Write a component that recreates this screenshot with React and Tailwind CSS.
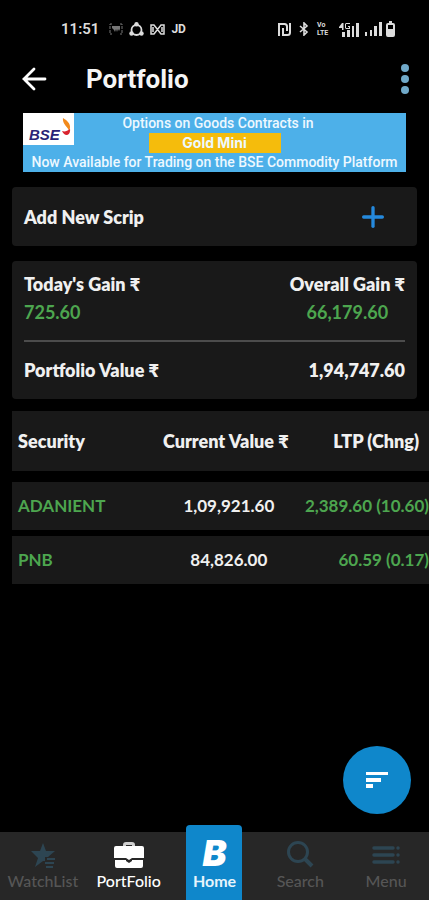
import { Plus } from "lucide-react";

const holdings = [
  { name: "ADANIENT", value: "1,09,921.60", ltp: "2,389.60 (10.60)" },
  { name: "PNB", value: "84,826.00", ltp: "60.59 (0.17)" },
];

function StatusBar() {
  return (
    <div className="flex h-[54px] items-center justify-between pt-1 pr-[34px] pl-[61px] font-['Roboto',sans-serif] text-[#dcdcdc]">
      <div className="flex items-center gap-1.5">
        <span className="mr-1 text-[15px] font-semibold">11:51</span>

        <svg width="14" height="12" viewBox="0 0 14 12" className="text-[#777]">
          <path d="M3 1H1v10h2M11 1h2v10h-2" fill="none" stroke="currentColor" strokeDasharray="3 1" />
          <path d="M3 3h8v3l-1 2-1-2-1 3-1-3-1 3-1-2-2-2z" fill="currentColor" />
        </svg>

        <svg width="15" height="15" viewBox="0 0 15 15">
          <circle cx="7.5" cy="8" r="5" fill="none" stroke="currentColor" strokeWidth="1.8" />
          <circle cx="7.5" cy="2.3" r="2.2" fill="currentColor" />
          <circle cx="2.5" cy="11.5" r="2.2" fill="currentColor" />
          <circle cx="12.5" cy="11.5" r="2.2" fill="currentColor" />
        </svg>

        <svg width="15" height="11" viewBox="0 0 15 11" fill="none" stroke="currentColor" strokeWidth="1.5">
          <path d="M4 1H1v9h3l7-9h3v9h-3L4 1zM3 3v5M12 3v5" />
        </svg>

        <span className="text-xs font-bold">JD</span>
      </div>

      <div className="flex items-center gap-2">
        <svg width="13" height="13" viewBox="0 0 13 13" fill="none" stroke="currentColor" strokeWidth="2">
          <path d="M1 13V1h5.500q2.500 0 2.500 2.500V8M12 0v9.500q0 2.500-2.500 2.500H5V5" />
        </svg>

        <svg width="10" height="14" viewBox="0 0 10 14" fill="none" stroke="currentColor" strokeWidth="1.6">
          <path d="M1 4l7 6-3 3V1l3 3-7 6" />
        </svg>

        <div className="flex w-3.5 flex-col text-[7px] leading-2 font-bold">
          <span>Vo</span>
          <span>LTE</span>
        </div>

        <svg width="20" height="15" viewBox="0 0 20 15" fill="currentColor">
          <path d="M3 10h3v5H3zM8 8h3v7H8zM13 4h2v11h-2zM17 1h3v14h-3zM3 1l-3 4v1h3v2h1.500V1zM11 1H7L6 2v4l1 1h4V4H9v1h1v1H7V2h4z" />
        </svg>

        <svg width="17" height="14" viewBox="0 0 17 14" fill="currentColor" className="-ml-0.5">
          <path d="M0 10h2v4H0zM5 8h2v6H5zM9 4h3v10H9zM14 0h3v14h-3z" />
        </svg>

        <svg width="9" height="16" viewBox="0 0 9 16" className="-ml-1">
          <path d="M3 0h3v2H3z" fill="currentColor" />
          <rect x="1" y="3" width="7" height="12" rx="1" fill="none" stroke="currentColor" strokeWidth="2" />
          <path d="M2 8h5v6H2z" fill="currentColor" />
        </svg>
      </div>
    </div>
  );
}

function Header() {
  return (
    <header className="flex h-[50px] items-center pr-[19px] pl-[21px]">
      <button type="button" aria-label="Back">
        <svg width="26" height="24" viewBox="0 0 26 24" fill="none" stroke="white" strokeWidth="2.800" strokeLinecap="round">
          <path d="M24 12H3M13 2L3 12l10 10" />
        </svg>
      </button>

      <h1 className="ml-[39px] flex-1 font-['Roboto',sans-serif] text-[26px] leading-8 font-bold text-[#f5f5f5]">
        Portfolio
      </h1>

      <button type="button" aria-label="More options">
        <svg width="10" height="32" viewBox="0 0 10 32" fill="#70a9c9">
          <circle cx="5" cy="5" r="4" />
          <circle cx="5" cy="16" r="4" />
          <circle cx="5" cy="27" r="4" />
        </svg>
      </button>
    </header>
  );
}

function Banner() {
  return (
    <a
      href="#gold-mini"
      className="relative mx-[23px] mt-[9px] block h-[59px] bg-[#4db0e9] text-center font-['Roboto',sans-serif] text-sm leading-5 font-medium whitespace-nowrap text-[#edf8ff]"
    >
      <div className="absolute top-0 left-0 flex h-8 w-[51px] items-end gap-0.5 bg-white pb-1 pl-1.5">
        <span className="font-['Liberation_Sans',sans-serif] text-[15px] leading-3 font-bold text-[#2a2376] italic">
          BSE
        </span>
        <svg width="9" height="19" viewBox="0 0 9 19" className="mb-1">
          <path d="M1 0c5 3 9 7 6 13C6 9 0 6 1 0z" fill="#f28a1c" />
          <path d="M0 13c3 1 5 0 8-2 1 6-5 9-8 2z" fill="#d9232e" />
        </svg>
      </div>

      <p className="pl-[7px]">Options on Goods Contracts in</p>
      <p className="mx-auto w-[132px] bg-[#f5bc0c] font-['Inter',sans-serif] font-bold">Gold Mini</p>
      <p className="leading-[19px]">Now Available for Trading on the BSE Commodity Platform</p>
    </a>
  );
}

function Holdings() {
  return (
    <table className="mt-3 ml-3 table-fixed border-separate border-spacing-0 whitespace-nowrap">
      <thead>
        <tr className="h-[60px] bg-[#191919] *:font-extrabold">
          <th className="w-[34%] pl-1.5 text-left">Security</th>
          <th className="w-[36%] pr-1.5 text-center">Current Value ₹</th>
          <th className="w-[30%] pr-2.5 text-right">LTP (Chng)</th>
        </tr>
      </thead>
      <tbody className="text-[17px]">
        {holdings.map((h, i) => (
          <tr
            key={h.name}
            className={i === 0 ? "h-[59px] bg-[#191919] *:border-t-[11px]" : "h-[54px] bg-[#191919] *:border-t-[6px]"}
          >
            <td className="border-black pl-1.5 text-[#4da64f]">{h.name}</td>
            <td className="border-black text-center">{h.value}</td>
            <td className="border-black text-right text-[#4da64f]">{h.ltp}</td>
          </tr>
        ))}
      </tbody>
    </table>
  );
}

function NavItem({ label, active, children }) {
  return (
    <button
      type="button"
      className={
        "flex h-[68px] flex-1 flex-col items-center justify-end gap-[3px] pb-[9px] leading-5 " +
        (active ? "text-white" : "text-[#565656]")
      }
    >
      {children}
      {label}
    </button>
  );
}

function BottomNav() {
  return (
    <nav className="flex h-[68px] items-end bg-[#272727] text-base font-medium">
      <NavItem label="WatchList">
        <svg width="26" height="26" viewBox="0 0 26 26" fill="#2d4552">
          <path d="M13 1l3 8h9l-7 6h-3v4h-2l-8 6 3-9-7-7h9z" />
          <path d="M17 16h8v2h-8zM15 20h9v2h-9zM16 24h7v2h-7z" />
        </svg>
      </NavItem>

      <NavItem label="PortFolio" active>
        <svg width="30" height="26" viewBox="0 0 30 26" fill="white">
          <path d="M9 5V3q0-3 3-3h6q3 0 3 3v2h-3V3h-6v2z" fill="#d0d0d0" />
          <path d="M2 4h26q2 0 2 2v10H18l-3 2-3-2H0V6q0-2 2-2z" />
          <path d="M1 18h11v1l3 2 3-2v-1h11v6q0 2-2 2H3q-2 0-2-2z" />
        </svg>
      </NavItem>

      <div className="flex flex-1 justify-center">
        <button
          type="button"
          className="flex h-[75px] w-14 flex-col items-center justify-end rounded-t bg-[#0f87cb] pb-[9px] leading-5 font-bold text-[#e6f4fc]"
        >
          <span className="font-['Inter',sans-serif] text-4xl leading-9 font-black text-white italic">B</span>
          Home
        </button>
      </div>

      <NavItem label="Search">
        <svg width="28" height="28" viewBox="0 0 28 28" fill="none" stroke="#2d4552" strokeWidth="3">
          <circle cx="12" cy="12" r="9.500" />
          <path d="M19 19l7 7" strokeWidth="4" />
        </svg>
      </NavItem>

      <NavItem label="Menu">
        <svg width="28" height="23" viewBox="0 0 28 23" stroke="#2d4552" strokeWidth="3.500" strokeLinecap="round">
          <path d="M2 3h19M2 10h19M2 17h19M26 3h0M26 10h0M26 17h0" />
        </svg>
      </NavItem>
    </nav>
  );
}

export default function App() {
  return (
    <div className="relative flex min-h-screen flex-col overflow-hidden bg-black font-['Lato',sans-serif] text-lg leading-6 font-bold text-[#f0f0f0]">
      <StatusBar />
      <Header />

      <main className="flex flex-1 flex-col">
        <Banner />

        <button
          type="button"
          className="mx-3 mt-[15px] flex h-[59px] items-center justify-between rounded bg-[#191919] pr-7 pl-3 font-extrabold"
        >
          Add New Scrip
          <Plus size={32} strokeWidth={2.5} className="text-[#2589dc]" />
        </button>

        <section className="mx-3 mt-[15px] rounded bg-[#191919] px-3 pt-[11px] pb-[17px]">
          <div className="flex justify-between pb-4">
            <div>
              <h2 className="font-extrabold">Today's Gain ₹</h2>
              <p className="mt-1 text-[#4da64f]">725.60</p>
            </div>
            <div className="text-center">
              <h2 className="font-extrabold">Overall Gain ₹</h2>
              <p className="mt-1 text-[#4da64f]">66,179.60</p>
            </div>
          </div>

          <div className="flex justify-between border-t-2 border-[#4c4c4c] pt-4 font-extrabold">
            <h2>Portfolio Value ₹</h2>
            <p>1,94,747.60</p>
          </div>
        </section>

        <Holdings />
      </main>

      <button
        type="button"
        aria-label="Sort"
        className="absolute right-[18px] bottom-[86px] flex size-[68px] items-center justify-center rounded-full bg-[#0f87cb]"
      >
        <svg width="22" height="16" viewBox="0 0 22 16" fill="white">
          <path d="M0 0h22v3H0zM0 6h15v4H0zM0 12h7v4H0z" />
        </svg>
      </button>

      <BottomNav />
    </div>
  );
}
